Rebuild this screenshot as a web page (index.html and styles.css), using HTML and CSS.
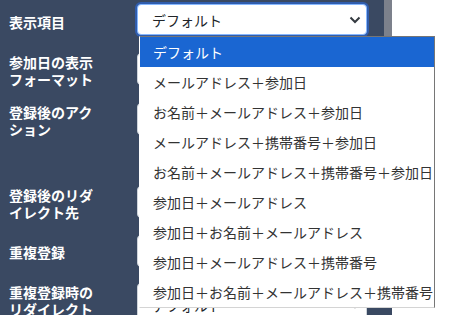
FILE: index.html
```html
<!DOCTYPE html>
<html lang="ja">
<head>
<meta charset="utf-8">
<link rel="stylesheet" href="styles.css">
</head>
<body>
<div class="page">
  <div class="panel">
    <form class="form">
      <div class="row row-1">
        <div class="label label-first">表示項目</div>
        <div class="select select-focus"><span class="value">デフォルト</span><svg class="chev" width="12" height="8" viewBox="0 0 12 8"><path d="M1.5 1.5 L6 6 L10.5 1.5" fill="none" stroke="#343a40" stroke-width="2"/></svg></div>
      </div>
      <div class="row row-2">
        <div class="label">参加日の表示フォーマット</div>
        <div class="select"><span class="value">デフォルト</span><svg class="chev" width="12" height="8" viewBox="0 0 12 8"><path d="M1.5 1.5 L6 6 L10.5 1.5" fill="none" stroke="#343a40" stroke-width="2"/></svg></div>
      </div>
      <div class="row row-3">
        <div class="label">登録後のアクション</div>
        <div class="select"><span class="value">デフォルト</span><svg class="chev" width="12" height="8" viewBox="0 0 12 8"><path d="M1.5 1.5 L6 6 L10.5 1.5" fill="none" stroke="#343a40" stroke-width="2"/></svg></div>
      </div>
      <div class="row row-4">
        <div class="label">登録後のリダイレクト先</div>
        <div class="select"><span class="value">デフォルト</span><svg class="chev" width="12" height="8" viewBox="0 0 12 8"><path d="M1.5 1.5 L6 6 L10.5 1.5" fill="none" stroke="#343a40" stroke-width="2"/></svg></div>
      </div>
      <div class="row row-5">
        <div class="label label-single">重複登録</div>
        <div class="select"><span class="value">デフォルト</span><svg class="chev" width="12" height="8" viewBox="0 0 12 8"><path d="M1.5 1.5 L6 6 L10.5 1.5" fill="none" stroke="#343a40" stroke-width="2"/></svg></div>
      </div>
      <div class="row row-6">
        <div class="label">重複登録時のリダイレクト先</div>
        <div class="select select-tall"><span class="value">デフォルト</span><svg class="chev" width="12" height="8" viewBox="0 0 12 8"><path d="M1.5 1.5 L6 6 L10.5 1.5" fill="none" stroke="#343a40" stroke-width="2"/></svg></div>
      </div>
    </form>
    <div class="scrollbar"><div class="thumb"></div></div>
  </div>
  <ul class="listbox">
    <li class="option selected">デフォルト</li>
    <li class="option">メールアドレス＋参加日</li>
    <li class="option">お名前＋メールアドレス＋参加日</li>
    <li class="option">メールアドレス＋携帯番号＋参加日</li>
    <li class="option">お名前＋メールアドレス＋携帯番号＋参加日</li>
    <li class="option">参加日＋メールアドレス</li>
    <li class="option">参加日＋お名前＋メールアドレス</li>
    <li class="option">参加日＋メールアドレス＋携帯番号</li>
    <li class="option">参加日＋お名前＋メールアドレス＋携帯番号</li>
  </ul>
</div>
</body>
</html>
```

FILE: styles.css
```css
* { box-sizing: border-box; }
html, body {
  margin: 0;
  padding: 0;
  background: #ffffff;
  font-family: "Noto Sans CJK JP", "Noto Sans", sans-serif;
  font-size: 14px;
}
.page {
  position: relative;
  width: 475px;
  height: 315px;
  overflow: hidden;
}
.panel {
  display: flex;
  width: 392px;
  height: 315px;
  background: #3a4962;
  overflow: hidden;
}
.form {
  width: 384px;
  margin: 0;
  padding: 4px 0 0 9px;
}
.scrollbar {
  width: 8px;
  background: #3a4962;
}
.thumb {
  height: 60px;
  background: #7c818c;
}
.row {
  display: flex;
  align-items: flex-start;
}
.row-1 { margin-bottom: 18px; }
.row-2 { margin-bottom: 15px; }
.row-3 { margin-bottom: 48px; }
.row-4 { margin-bottom: 14px; }
.row-5 { margin-bottom: 16px; }
.label {
  width: 95px;
  margin-right: 33px;
  margin-top: 1px;
  color: #ffffff;
  font-weight: 700;
  line-height: 17px;
}
.label-first { margin-top: 10px; }
.label-single { margin-top: 9px; }
.select {
  display: flex;
  align-items: center;
  width: 230px;
  height: 32px;
  padding: 0 5px 0 14px;
  background: #ffffff;
  border: 1px solid #ced4da;
  border-radius: 4px;
  color: #212529;
}
.select-focus {
  height: 31px;
  border-color: #86b7fe;
  box-shadow: 0 0 0 2px rgba(40, 110, 235, 0.55);
}
.select-tall {
  height: 44px;
}
.value {
  flex: 1;
  line-height: 20px;
}
.chev {
  display: block;
}
.listbox {
  position: absolute;
  left: 139px;
  top: 36px;
  width: 296px;
  margin: 0;
  padding: 0;
  list-style: none;
  background: #ffffff;
  border: 1px solid #767676;
  border-bottom-color: #d4d4d4;
  border-left-color: #ffffff;
}
.option {
  height: 30px;
  line-height: 30px;
  padding-left: 13px;
  color: #333333;
  white-space: nowrap;
}
.option.selected {
  background: #1a66d2;
  color: #ffffff;
}
```
